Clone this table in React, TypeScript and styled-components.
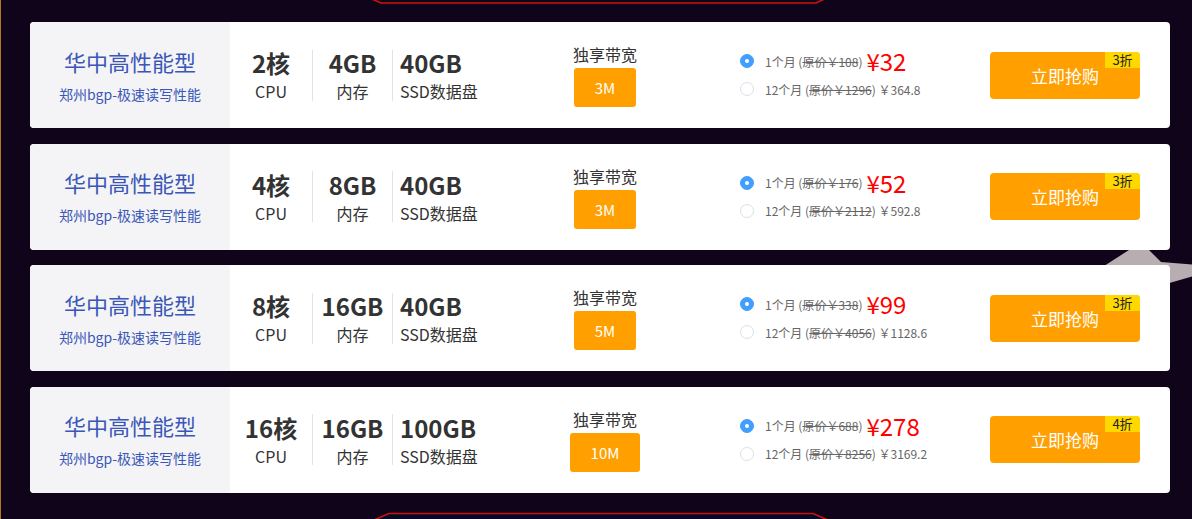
import React from 'react';
import styled, { createGlobalStyle } from 'styled-components';

const Global = createGlobalStyle`
  html, body { margin: 0; padding: 0; background: #10041a; }
  body { font-family: "Noto Sans CJK SC", "Noto Sans", sans-serif; }
  * { box-sizing: border-box; }
`;

const Page = styled.div`
  position: relative;
  height: 519px;
  overflow: hidden;
  background: #10041a;
  border-left: 1px solid #b8731f;
  padding: 22px 22px 0 29px;
`;

const Decor = styled.svg`
  position: absolute;
  left: 0;
  top: 0;
  width: 1192px;
  height: 519px;
  z-index: 0;
  pointer-events: none;
`;

const List = styled.div`
  position: relative;
  z-index: 1;
  display: flex;
  flex-direction: column;
  gap: 15.67px;
`;

const Card = styled.div`
  display: flex;
  align-items: center;
  height: 106px;
  background: #fff;
  border-radius: 4px;
  overflow: hidden;
`;

const Brand = styled.div`
  width: 200px;
  align-self: stretch;
  background: #f4f4f6;
  display: flex;
  flex-direction: column;
  align-items: center;
  justify-content: center;
`;

const BrandTitle = styled.div`
  font-size: 22px;
  line-height: 30px;
  color: #3a57b8;
`;

const BrandSub = styled.div`
  font-size: 14px;
  line-height: 22px;
  margin-top: 7px;
  color: #3a57b8;
`;

const Specs = styled.div`
  display: flex;
  align-items: center;
`;

const Spec = styled.div<{ $w: number; $left?: boolean }>`
  width: ${(p) => p.$w}px;
  text-align: ${(p) => (p.$left ? 'left' : 'center')};
  padding-left: ${(p) => (p.$left ? '7px' : '0')};
  padding-top: 2px;
`;

const SpecValue = styled.div`
  font-size: 24px;
  font-weight: 700;
  line-height: 30px;
  color: #333;
`;

const SpecLabel = styled.div`
  font-size: 16px;
  line-height: 26px;
  color: #333;
`;

const Divider = styled.div`
  width: 1px;
  height: 51px;
  background: #e3e3e3;
`;

const Bandwidth = styled.div`
  width: 120px;
  margin-left: 62px;
  display: flex;
  flex-direction: column;
  align-items: center;
`;

const BwLabel = styled.div`
  font-size: 16px;
  line-height: 22px;
  color: #333;
  margin-bottom: 3px;
`;

const BwButton = styled.div`
  height: 39px;
  line-height: 39px;
  padding: 0 21px;
  background: #ffa000;
  color: #fff;
  font-size: 15px;
  border-radius: 3px;
`;

const Plans = styled.div`
  flex: 1;
  margin-left: 75px;
  display: flex;
  flex-direction: column;
`;

const PlanRow = styled.div`
  display: flex;
  align-items: center;
  height: 28px;
  font-size: 12px;
  color: #666;
  white-space: pre;
`;

const Radio = styled.span<{ $on?: boolean }>`
  width: 14px;
  height: 14px;
  border-radius: 50%;
  margin-right: 11px;
  border: 1px solid ${(p) => (p.$on ? '#409eff' : '#dcdfe6')};
  background: ${(p) => (p.$on ? '#409eff' : '#fff')};
  display: flex;
  align-items: center;
  justify-content: center;
  &::after {
    content: '';
    width: 4px;
    height: 4px;
    border-radius: 50%;
    background: #fff;
    display: ${(p) => (p.$on ? 'block' : 'none')};
  }
`;

const Strike = styled.span`
  text-decoration: line-through;
`;

const Price = styled.span`
  font-size: 24px;
  color: #ff0000;
  margin-left: 4px;
  line-height: 28px;
`;

const BuyButton = styled.div`
  position: relative;
  width: 150px;
  height: 47px;
  margin-right: 30px;
  background: #ffa000;
  border-radius: 4px;
  color: #fff;
  font-size: 17px;
  display: flex;
  align-items: center;
  justify-content: center;
`;

const Badge = styled.span`
  position: absolute;
  top: 0;
  right: 0;
  width: 35px;
  height: 16px;
  line-height: 16px;
  text-align: center;
  font-size: 13px;
  color: #222;
  background: #ffd800;
  border-top-right-radius: 4px;
`;

type Item = {
  cpu: string;
  mem: string;
  disk: string;
  bw: string;
  orig1: string;
  price1: string;
  orig12: string;
  price12: string;
  off: string;
};

const items: Item[] = [
  { cpu: '2核', mem: '4GB', disk: '40GB', bw: '3M', orig1: '108', price1: '32', orig12: '1296', price12: '364.8', off: '3折' },
  { cpu: '4核', mem: '8GB', disk: '40GB', bw: '3M', orig1: '176', price1: '52', orig12: '2112', price12: '592.8', off: '3折' },
  { cpu: '8核', mem: '16GB', disk: '40GB', bw: '5M', orig1: '338', price1: '99', orig12: '4056', price12: '1128.6', off: '3折' },
  { cpu: '16核', mem: '16GB', disk: '100GB', bw: '10M', orig1: '688', price1: '278', orig12: '8256', price12: '3169.2', off: '4折' },
];

export default function App() {
  return (
    <>
      <Global />
      <Page>
        <Decor viewBox="0 0 1192 519">
          <path d="M364 -4 L380 3 L815 3 L830 -4" fill="none" stroke="#d0120e" strokeWidth="1.6" />
          <path d="M366 523 L388 513.5 L812 513.5 L834 523 Z" fill="#070a26" stroke="#d0120e" strokeWidth="1.6" />
          <polygon points="1128,250 1148,250 1160,262 1196,265 1196,275 1165,284 1110,284 1103,266" fill="#b8adb0" />
        </Decor>
        <List>
          {items.map((it, i) => (
            <Card key={i}>
              <Brand>
                <BrandTitle>华中高性能型</BrandTitle>
                <BrandSub>郑州bgp-极速读写性能</BrandSub>
              </Brand>
              <Specs>
                <Spec $w={82}>
                  <SpecValue>{it.cpu}</SpecValue>
                  <SpecLabel>CPU</SpecLabel>
                </Spec>
                <Divider />
                <Spec $w={79}>
                  <SpecValue>{it.mem}</SpecValue>
                  <SpecLabel>内存</SpecLabel>
                </Spec>
                <Divider />
                <Spec $w={90} $left>
                  <SpecValue>{it.disk}</SpecValue>
                  <SpecLabel>SSD数据盘</SpecLabel>
                </Spec>
              </Specs>
              <Bandwidth>
                <BwLabel>独享带宽</BwLabel>
                <BwButton>{it.bw}</BwButton>
              </Bandwidth>
              <Plans>
                <PlanRow>
                  <Radio $on />
                  1个月 (<Strike>原价￥{it.orig1}</Strike>)
                  <Price>¥{it.price1}</Price>
                </PlanRow>
                <PlanRow>
                  <Radio />
                  12个月 (<Strike>原价￥{it.orig12}</Strike>) ￥{it.price12}
                </PlanRow>
              </Plans>
              <BuyButton>
                立即抢购
                <Badge>{it.off}</Badge>
              </BuyButton>
            </Card>
          ))}
        </List>
      </Page>
    </>
  );
}
